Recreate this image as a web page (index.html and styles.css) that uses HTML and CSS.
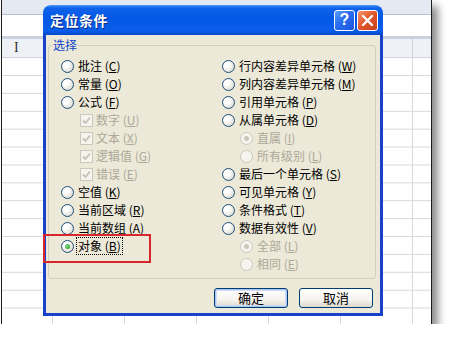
FILE: index.html
```html
<!DOCTYPE html>
<html lang="zh-CN">
<head>
<meta charset="utf-8">
<title>定位条件</title>
<link rel="stylesheet" href="styles.css">
</head>
<body>
<div class="screen">
  <div class="toolbar"></div>
  <div class="formula"></div>
  <div class="sep"></div>
  <div class="heads"><span class="ibeam">I</span></div>
  <div class="sheet"></div>

  <div class="dialog">
    <div class="titlebar">
      <span class="title">定位条件</span>
      <span class="tb-btn help">?</span>
      <span class="tb-btn close"><svg width="13" height="13" viewBox="0 0 13 13"><path d="M2 2 L11 11 M11 2 L2 11" stroke="#fff" stroke-width="2.4" stroke-linecap="round"/></svg></span>
    </div>
    <div class="body">
      <div class="group">
        <span class="caption">选择</span>
        <div class="col">
          <div class="opt"><i class="radio"></i><span>批注 (<u>C</u>)</span></div>
          <div class="opt"><i class="radio"></i><span>常量 (<u>O</u>)</span></div>
          <div class="opt"><i class="radio"></i><span>公式 (<u>F</u>)</span></div>
          <div class="opt sub dis"><i class="check"><svg width="9" height="9" viewBox="0 0 9 9"><path d="M1 4.5 L3.5 7 L8 1.5" fill="none" stroke="#c4c2b6" stroke-width="1.8"/></svg></i><span>数字 (<u>U</u>)</span></div>
          <div class="opt sub dis"><i class="check"><svg width="9" height="9" viewBox="0 0 9 9"><path d="M1 4.5 L3.5 7 L8 1.5" fill="none" stroke="#c4c2b6" stroke-width="1.8"/></svg></i><span>文本 (<u>X</u>)</span></div>
          <div class="opt sub dis"><i class="check"><svg width="9" height="9" viewBox="0 0 9 9"><path d="M1 4.5 L3.5 7 L8 1.5" fill="none" stroke="#c4c2b6" stroke-width="1.8"/></svg></i><span>逻辑值 (<u>G</u>)</span></div>
          <div class="opt sub dis"><i class="check"><svg width="9" height="9" viewBox="0 0 9 9"><path d="M1 4.5 L3.5 7 L8 1.5" fill="none" stroke="#c4c2b6" stroke-width="1.8"/></svg></i><span>错误 (<u>E</u>)</span></div>
          <div class="opt"><i class="radio"></i><span>空值 (<u>K</u>)</span></div>
          <div class="opt"><i class="radio"></i><span>当前区域 (<u>R</u>)</span></div>
          <div class="opt"><i class="radio"></i><span>当前数组 (<u>A</u>)</span></div>
          <div class="opt"><i class="radio on"></i><span class="focus">对象 (<u>B</u>)</span></div>
        </div>
        <div class="col">
          <div class="opt"><i class="radio"></i><span>行内容差异单元格 (<u>W</u>)</span></div>
          <div class="opt"><i class="radio"></i><span>列内容差异单元格 (<u>M</u>)</span></div>
          <div class="opt"><i class="radio"></i><span>引用单元格 (<u>P</u>)</span></div>
          <div class="opt"><i class="radio"></i><span>从属单元格 (<u>D</u>)</span></div>
          <div class="opt sub2 dis"><i class="radio on"></i><span>直属 (<u>I</u>)</span></div>
          <div class="opt sub2 dis"><i class="radio"></i><span>所有级别 (<u>L</u>)</span></div>
          <div class="opt"><i class="radio"></i><span>最后一个单元格 (<u>S</u>)</span></div>
          <div class="opt"><i class="radio"></i><span>可见单元格 (<u>Y</u>)</span></div>
          <div class="opt"><i class="radio"></i><span>条件格式 (<u>T</u>)</span></div>
          <div class="opt"><i class="radio"></i><span>数据有效性 (<u>V</u>)</span></div>
          <div class="opt sub2 dis"><i class="radio on"></i><span>全部 (<u>L</u>)</span></div>
          <div class="opt sub2 dis"><i class="radio"></i><span>相同 (<u>E</u>)</span></div>
        </div>
      </div>
      <div class="buttons">
        <button class="btn default">确定</button>
        <button class="btn">取消</button>
      </div>
    </div>
  </div>

  <div class="highlight"></div>
</div>
</body>
</html>
```

FILE: styles.css
```css
html, body {
  margin: 0;
  padding: 0;
  background: #ffffff;
  overflow: hidden;
}

.screen {
  position: relative;
  margin-left: 1px;
  width: 429px;
  height: 323px;
  border: 1px solid #1e1e1e;
  border-top: 0;
  background: #ffffff;
  box-shadow: 6px 6px 8px rgba(0, 0, 0, 0.45);
  font-family: "Noto Sans CJK SC", "Noto Sans", sans-serif;
}

.toolbar {
  height: 14px;
  background: #e5e9f1;
  border-bottom: 1px solid #b7c1d3;
}

.formula {
  height: 21px;
  background: #ffffff;
}

.sep {
  height: 3px;
  background: #c9d1de;
}

.heads {
  height: 18px;
  background-color: #eef1f6;
  background-image: linear-gradient(to right, #d0d4dc 1px, transparent 1px);
  background-size: 72px 18px;
  background-position: 410px 0;
  background-repeat: no-repeat;
  display: flex;
  align-items: center;
  padding-left: 12px;
}

.ibeam {
  font-family: "Liberation Serif", serif;
  font-size: 14px;
  line-height: 14px;
  color: #333;
}

.sheet {
  height: 266px;
  border-top: 1px solid #d0d4dc;
  background-color: #ffffff;
  background-image:
    linear-gradient(to bottom, #d8d8d8 1px, transparent 1px),
    linear-gradient(to right, #d8d8d8 1px, transparent 1px);
  background-size: 72px 17.9px, 72px 18px;
  background-position: 50px 17px, 50px 0;
}

/* dialog window */
.dialog {
  position: absolute;
  left: 41px;
  top: 5px;
  width: 340px;
  height: 311px;
  display: flex;
  flex-direction: column;
}

.titlebar {
  height: 30px;
  flex: none;
  display: flex;
  align-items: center;
  gap: 2px;
  padding: 0 5px 0 7px;
  border-radius: 8px 8px 0 0;
  background: linear-gradient(to bottom, #4a98f8 0, #0e62ea 3px, #0558e6 45%, #0a5ee9 85%, #0647cc 100%);
}

.title {
  flex: 1;
  color: #ffffff;
  font-size: 14px;
  font-weight: bold;
  letter-spacing: 0.5px;
  text-shadow: 1px 1px 0 #0a2a8a;
}

.tb-btn {
  width: 19px;
  height: 19px;
  border: 1px solid #ffffff;
  border-radius: 3px;
  display: flex;
  align-items: center;
  justify-content: center;
  color: #ffffff;
  font-family: "Liberation Sans", sans-serif;
  font-weight: bold;
  font-size: 16px;
}

.help {
  background: linear-gradient(135deg, #5a9cf8 0%, #2a6cf0 45%, #1a55dc 100%);
}

.close {
  background: linear-gradient(135deg, #f39a74 0%, #e2582e 45%, #c8401c 100%);
}

.body {
  flex: 1;
  background: #ece9d8;
  border: 3px solid #1742c9;
  border-top: 0;
  padding: 10px 4px 0 2px;
}

.group {
  position: relative;
  border: 1px solid #d0d0bf;
  border-radius: 3px;
  padding: 11px 0 5px 12px;
  display: grid;
  grid-template-columns: 161px 1fr;
  font-size: 12px;
  color: #000;
}

.caption {
  position: absolute;
  left: 3px;
  top: -9px;
  padding: 0 1px;
  background: #ece9d8;
  color: #1046c8;
  font-size: 12px;
  line-height: 16px;
}

.col {
  display: flex;
  flex-direction: column;
}

.opt {
  height: 18px;
  display: flex;
  align-items: center;
  gap: 4px;
  white-space: nowrap;
  line-height: 16px;
}

.opt.sub {
  padding-left: 19px;
  gap: 3px;
}

.opt.sub2 {
  padding-left: 18px;
}

.opt.dis {
  color: #aca899;
}

.radio {
  position: relative;
  flex: none;
  width: 11px;
  height: 11px;
  border: 1px solid #1c5180;
  border-radius: 50%;
  background: radial-gradient(circle at 35% 35%, #ffffff 25%, #e9e7df 60%, #cfccc0 100%);
}

.radio.on::after {
  content: "";
  position: absolute;
  left: 3px;
  top: 3px;
  width: 5px;
  height: 5px;
  border-radius: 50%;
  background: radial-gradient(circle at 40% 40%, #8be08b 0%, #2fa82f 70%, #1f8a1f 100%);
}

.dis .radio {
  border-color: #cac8bb;
  background: #f5f4ef;
}

.dis .radio.on::after {
  background: #cac8bb;
}

.check {
  flex: none;
  width: 11px;
  height: 11px;
  border: 1px solid #cac8bb;
  background: #f5f4ef;
  display: flex;
  align-items: center;
  justify-content: center;
}

.check svg {
  display: block;
}

u {
  text-decoration: underline;
}

.focus {
  outline: 1px dotted #000;
  outline-offset: 0;
  padding: 0 1px;
  margin-left: -1px;
}

.buttons {
  display: flex;
  justify-content: flex-end;
  gap: 11px;
  margin-top: 9px;
  padding-right: 3px;
}

.btn {
  width: 74px;
  height: 20px;
  padding: 0;
  border: 1px solid #003c74;
  border-radius: 3px;
  background: linear-gradient(to bottom, #ffffff 0%, #f4f3ee 60%, #dcd8cc 100%);
  font-family: "Noto Sans CJK SC", sans-serif;
  font-size: 13px;
  line-height: 16px;
  color: #000;
}

.btn.default {
  box-shadow: inset 0 0 0 1px #a8c4f0, inset 0 0 0 2px #cfdef7;
}

/* red annotation frame */
.highlight {
  position: absolute;
  left: 41px;
  top: 234px;
  width: 104px;
  height: 25px;
  border: 2px solid #d7262c;
}
```
